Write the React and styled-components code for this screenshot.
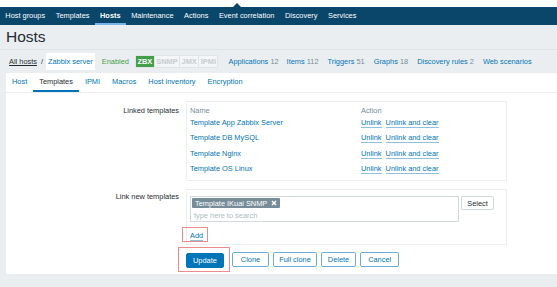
import React from "react";
import styled, { createGlobalStyle } from "styled-components";

const GlobalStyle = createGlobalStyle`
  html, body {
    margin: 0;
    padding: 0;
    background: #ebeef0;
    font-family: "Liberation Sans", Arial, sans-serif;
    font-size: 7.4px;
    color: #1f2c33;
  }
`;

const Page = styled.div`
  width: 557px;
  height: 287px;
  overflow: hidden;
  background: #ebeef0;
`;

const TopStrip = styled.div`
  background: #fff;
  padding-top: 7px;
`;

const Nav = styled.nav`
  position: relative;
  height: 18px;
  background: #0a466a;
  display: flex;
  align-items: stretch;

  &::before {
    content: "";
    position: absolute;
    left: 233px;
    top: -4px;
    border-left: 4px solid transparent;
    border-right: 4px solid transparent;
    border-bottom: 4px solid #0a466a;
  }
`;

const NavItem = styled.a`
  display: flex;
  align-items: center;
  padding: 0 5.3px;
  color: #fff;
  font-weight: ${(p) => (p.$active ? "bold" : "normal")};
  border-bottom: 2px solid ${(p) => (p.$active ? "#76b4e8" : "transparent")};
  box-sizing: border-box;
  white-space: nowrap;
`;

const Header = styled.div`
  height: 24px;
  display: flex;
  align-items: center;
  padding-left: 6px;
  border-bottom: 1px solid #dfe4e7;
  font-size: 15.5px;
  color: #1f2c33;
`;

const Crumbs = styled.div`
  height: 23px;
  display: flex;
  align-items: center;
  padding-left: 9px;
  white-space: nowrap;
`;

const CrumbLink = styled.a`
  color: #1f2c33;
  text-decoration: underline;
`;

const Sep = styled.span`
  margin: 0 3px 0 4px;
`;

const Current = styled.span`
  background: #fff;
  padding: 4px 2px;
  color: #0275b8;
`;

const Status = styled.span`
  color: #429e47;
  margin-left: 7px;
`;

const Badges = styled.span`
  display: inline-flex;
  margin-left: 6px;
  border: 1px solid #dfe4e7;
  border-radius: 2px;
  background: #f4f5f6;
`;

const Badge = styled.span`
  padding: 1px 1.5px;
  font-weight: bold;
  color: ${(p) => (p.$on ? "#fff" : "#c5cdd1")};
  background: ${(p) => (p.$on ? "#429e47" : "transparent")};
  border-left: ${(p) => (p.$first ? "none" : "1px solid #dfe4e7")};
`;

const Counter = styled.span`
  margin-left: ${(p) => p.$gap || 9}px;
  color: #768d99;
`;

const CounterLink = styled.a`
  color: #0275b8;
`;

const Panel = styled.div`
  margin-left: 6px;
  background: #fff;
  height: 201px;
`;

const Tabs = styled.div`
  height: 19px;
  display: flex;
  align-items: stretch;
  border-bottom: 1px solid #ebeef0;
`;

const Tab = styled.a`
  display: flex;
  align-items: center;
  padding: 0 6px;
  color: ${(p) => (p.$active ? "#1f2c33" : "#0275b8")};
  border-bottom: 2px solid ${(p) => (p.$active ? "#0275b8" : "transparent")};
  box-sizing: border-box;
  white-space: nowrap;
`;

const Form = styled.div`
  display: grid;
  grid-template-columns: 173px 321px;
  column-gap: 7px;
  row-gap: 8px;
  padding-top: 8px;
`;

const Label = styled.div`
  text-align: right;
  padding-top: ${(p) => p.$top || 5}px;
  color: #1f2c33;
`;

const Box = styled.div`
  border: 1px solid #ebeef0;
  box-sizing: border-box;
  padding: ${(p) => p.$pad || "3px 3px 4px"};
`;

const Table = styled.table`
  border-collapse: collapse;
  width: 100%;
  td, th {
    padding: 0;
    height: 15.3px;
    text-align: left;
    font-weight: normal;
    white-space: nowrap;
  }
  th {
    color: #768d99;
    height: 10px;
  }
`;

const NameLink = styled.a`
  color: #0275b8;
`;

const ActionLink = styled.a`
  color: #0275b8;
  border-bottom: 1px solid #8fc0dd;
  margin-right: 4px;
`;

const PickerRow = styled.div`
  display: flex;
  align-items: flex-start;
  gap: 2px;
`;

const Multi = styled.div`
  width: 269px;
  height: 26px;
  border: 1px solid #d2d9dd;
  box-sizing: border-box;
  padding: 1px;
`;

const Tag = styled.span`
  display: inline-flex;
  align-items: center;
  gap: 4px;
  background: #768d99;
  color: #fff;
  height: 10px;
  padding: 0 3px;
  border-radius: 1px;
`;

const Placeholder = styled.div`
  color: #acbbc2;
  margin-top: 3px;
  padding-left: 2px;
`;

const SelectButton = styled.button`
  font: inherit;
  height: 14px;
  width: 33px;
  padding: 0;
  background: #fff;
  color: #1f2c33;
  border: 1px solid #d2d9dd;
  border-radius: 2px;
`;

const Marked = styled.div`
  display: inline-block;
  border: 1px solid #ec8b8b;
  margin-left: ${(p) => p.$ml}px;
  margin-right: ${(p) => p.$mr || 0}px;
  margin-top: ${(p) => p.$mt || 0}px;
  padding: ${(p) => p.$pad};
`;

const AddLink = styled.a`
  color: #0275b8;
  border-bottom: 1px solid #8fc0dd;
`;

const Buttons = styled.div`
  grid-column: 2;
  display: flex;
  align-items: center;
  gap: 4px;
  margin-top: -6px;
`;

const Button = styled.button`
  font: inherit;
  height: 15px;
  padding: 0 ${(p) => p.$px || 8}px;
  border-radius: 2px;
  border: 1px solid ${(p) => (p.$primary ? "#0275b8" : "#6aaed8")};
  background: ${(p) => (p.$primary ? "#0275b8" : "#fff")};
  color: ${(p) => (p.$primary ? "#fff" : "#0275b8")};
`;

const navItems = [
  "Host groups",
  "Templates",
  "Hosts",
  "Maintenance",
  "Actions",
  "Event correlation",
  "Discovery",
  "Services",
];

const tabs = ["Host", "Templates", "IPMI", "Macros", "Host inventory", "Encryption"];

const linked = [
  "Template App Zabbix Server",
  "Template DB MySQL",
  "Template Nginx",
  "Template OS Linux",
];

export default function App() {
  return (
    <Page>
      <GlobalStyle />
      <TopStrip>
        <Nav>
          {navItems.map((n) => (
            <NavItem key={n} $active={n === "Hosts"}>
              {n}
            </NavItem>
          ))}
        </Nav>
      </TopStrip>
      <Header>Hosts</Header>
      <Crumbs>
        <CrumbLink>All hosts</CrumbLink>
        <Sep>/</Sep>
        <Current>Zabbix server</Current>
        <Status>Enabled</Status>
        <Badges>
          <Badge $on $first>ZBX</Badge>
          <Badge>SNMP</Badge>
          <Badge>JMX</Badge>
          <Badge>IPMI</Badge>
        </Badges>
        <Counter $gap={10}>
          <CounterLink>Applications</CounterLink> 12
        </Counter>
        <Counter $gap={8}>
          <CounterLink>Items</CounterLink> 112
        </Counter>
        <Counter>
          <CounterLink>Triggers</CounterLink> 51
        </Counter>
        <Counter>
          <CounterLink>Graphs</CounterLink> 18
        </Counter>
        <Counter>
          <CounterLink>Discovery rules</CounterLink> 2
        </Counter>
        <Counter>
          <CounterLink>Web scenarios</CounterLink>
        </Counter>
      </Crumbs>
      <Panel>
        <Tabs>
          {tabs.map((t) => (
            <Tab key={t} $active={t === "Templates"}>
              {t}
            </Tab>
          ))}
        </Tabs>
        <Form>
          <Label $top={5}>Linked templates</Label>
          <Box $pad="3px 3px 4px">
            <Table>
              <thead>
                <tr>
                  <th style={{ width: "171px" }}>Name</th>
                  <th>Action</th>
                </tr>
              </thead>
              <tbody>
                {linked.map((l) => (
                  <tr key={l}>
                    <td>
                      <NameLink>{l}</NameLink>
                    </td>
                    <td>
                      <ActionLink>Unlink</ActionLink>
                      <ActionLink>Unlink and clear</ActionLink>
                    </td>
                  </tr>
                ))}
              </tbody>
            </Table>
          </Box>
          <Label $top={3}>Link new templates</Label>
          <Box $pad="6px 3px 2px 3px">
            <PickerRow>
              <Multi>
                <Tag>
                  Template IKuai SNMP
                  <svg width="6" height="6" viewBox="0 0 6 6">
                    <path d="M1 1L5 5M5 1L1 5" stroke="#fff" strokeWidth="1.5" />
                  </svg>
                </Tag>
                <Placeholder>type here to search</Placeholder>
              </Multi>
              <SelectButton>Select</SelectButton>
            </PickerRow>
            <Marked $ml={-8} $mt={5} $pad="3px 4px 1px 7px">
              <AddLink>Add</AddLink>
            </Marked>
          </Box>
          <Buttons>
            <Marked $ml={-8} $mr={-2} $pad="5px 5px 3px 7px">
              <Button $primary $px={6}>Update</Button>
            </Marked>
            <Button $px={8}>Clone</Button>
            <Button $px={5}>Full clone</Button>
            <Button $px={6}>Delete</Button>
            <Button $px={7}>Cancel</Button>
          </Buttons>
        </Form>
      </Panel>
    </Page>
  );
}
